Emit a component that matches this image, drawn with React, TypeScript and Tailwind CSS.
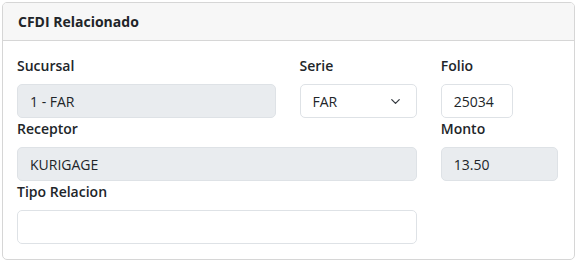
import { ChevronDown } from "lucide-react"

function Label({ children }: { children: React.ReactNode }) {
  return <label className="block text-[14px] font-semibold leading-[21px] text-[#212529] mb-[8px]">{children}</label>
}

export default function App() {
  return (
    <div className="pt-[2px] pl-[2px] font-['Open_Sans',sans-serif]">
      <div className="w-[573px] h-[258px] rounded-[5px] border border-[#d6d6d6] bg-white overflow-hidden">
        <div className="h-[38px] flex items-center px-[15px] bg-[#f7f7f7] border-b border-[#d6d6d6]">
          <span className="text-[14px] font-bold text-[#212529]">CFDI Relacionado</span>
        </div>
        <div className="pl-[14px] pt-[14px] w-[555px] grid grid-cols-12 gap-x-[24px]">
          <div className="col-span-6">
            <Label>Sucursal</Label>
            <div className="h-[34px] rounded-[5px] border border-[#dee2e6] bg-[#e9ecef] px-[12px] flex items-center text-[14px] text-[#212529]">1 - FAR</div>
          </div>
          <div className="col-span-3">
            <Label>Serie</Label>
            <div className="h-[34px] rounded-[5px] border border-[#dee2e6] bg-white pl-[12px] pr-[13px] flex items-center justify-between text-[14px] text-[#212529]">
              <span>FAR</span>
              <ChevronDown size={15} strokeWidth={2} className="text-[#343a40]" />
            </div>
          </div>
          <div className="col-span-3">
            <Label>Folio</Label>
            <div className="h-[34px] w-[72px] rounded-[5px] border border-[#dee2e6] bg-white px-[12px] flex items-center text-[14px] text-[#212529]">25034</div>
          </div>
          <div className="col-span-9">
            <Label>Receptor</Label>
            <div className="h-[34px] rounded-[5px] border border-[#dee2e6] bg-[#e9ecef] px-[12px] flex items-center text-[14px] text-[#212529]">KURIGAGE</div>
          </div>
          <div className="col-span-3">
            <Label>Monto</Label>
            <div className="h-[34px] rounded-[5px] border border-[#dee2e6] bg-[#e9ecef] px-[12px] flex items-center text-[14px] text-[#212529]">13.50</div>
          </div>
          <div className="col-span-9">
            <Label>Tipo Relacion</Label>
            <div className="h-[34px] rounded-[5px] border border-[#dee2e6] bg-white"></div>
          </div>
        </div>
      </div>
    </div>
  )
}
